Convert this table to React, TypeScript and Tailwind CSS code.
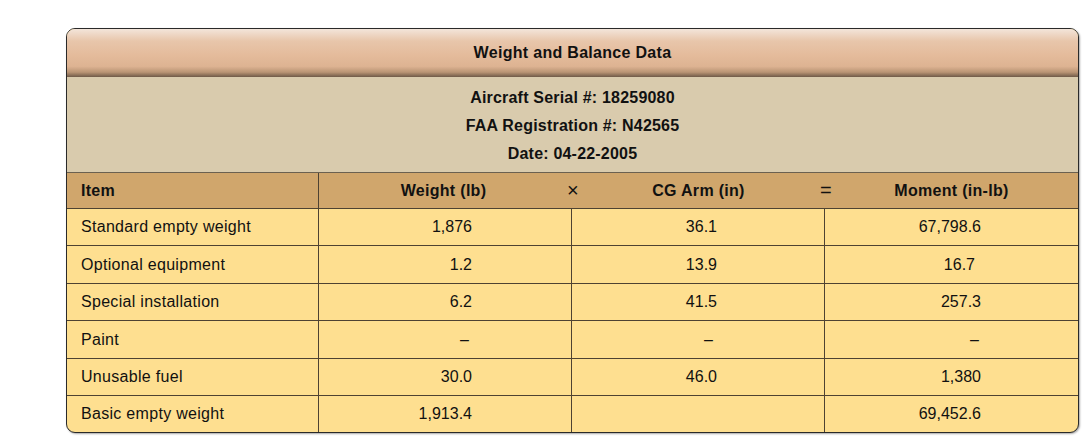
import React from "react";

const rows: { item: string; w: string; cg: string; m: string; mpr?: string }[] = [
  { item: "Standard empty weight", w: "1,876", cg: "36.1", m: "67,798.6" },
  { item: "Optional equipment", w: "1.2", cg: "13.9", m: "16.7", mpr: "pr-[103px]" },
  { item: "Special installation", w: "6.2", cg: "41.5", m: "257.3" },
  { item: "Paint", w: "–", cg: "–", m: "–" },
  { item: "Unusable fuel", w: "30.0", cg: "46.0", m: "1,380" },
  { item: "Basic empty weight", w: "1,913.4", cg: "", m: "69,452.6" },
];

const heights = ["h-[37px]", "h-[38px]", "h-[37px]", "h-[38px]", "h-[37px]", "h-[36px]"];

export default function App() {
  return (
    <div
      className="w-[1090px] h-[444px] bg-white pt-[28px] pl-[66px] text-[#111]"
      style={{ fontFamily: '"Liberation Sans", Arial, sans-serif' }}
    >
      <div className="w-[1013px] rounded-[9px] border border-[#2a2a2a] overflow-hidden shadow-[1px_1px_2px_rgba(0,0,0,0.35)] bg-[#fedf90]">
        <div className="h-[48px] flex items-center justify-center font-bold text-[16px] tracking-[0.3px] bg-[linear-gradient(to_bottom,#f3e5da_0%,#e8c6ab_25%,#e4bb9b_55%,#ddb392_78%,#b99474_90%,#6f5a48_100%)]">
          Weight and Balance Data
        </div>
        <div className="h-[96px] bg-[#d9cbad] flex flex-col items-center justify-center gap-[9px] font-bold text-[16px] tracking-[0.2px] leading-[19px] border-b border-[#6b6150] pt-[1px]">
          <div>Aircraft Serial #: 18259080</div>
          <div>FAA Registration #: N42565</div>
          <div>Date: 04-22-2005</div>
        </div>
        <div className="h-[36px] bg-[#d0a66c] grid grid-cols-[252px_253px_253px_253px] border-b border-[#4e4232] font-bold text-[16px] tracking-[0.3px] pt-[1px]">
          <div className="flex items-center pl-[14px] border-r border-[#4e4232] -mt-[1px]">Item</div>
          <div className="relative flex items-center justify-center pr-[4px]">
            Weight (lb)
            <span className="absolute right-[-7px] top-[4px] font-normal text-[20px] leading-[24px]">×</span>
          </div>
          <div className="relative flex items-center justify-center">
            CG Arm (in)
            <span className="absolute right-[-7px] top-[4px] font-normal text-[20px] leading-[24px]">=</span>
          </div>
          <div className="flex items-center justify-center">Moment (in-lb)</div>
        </div>
        {rows.map((r, i) => (
          <div
            key={i}
            className={`${heights[i]} grid grid-cols-[252px_253px_253px_253px] text-[16px] ${i < rows.length - 1 ? "border-b border-[#4e4232]" : ""}`}
          >
            <div className="flex items-center pl-[14px] border-r border-[#4e4232] tracking-[0.3px]">{r.item}</div>
            <div className="flex items-center justify-end pr-[99px] border-r border-[#4e4232]">
              {r.w === "–" ? <span className="pr-[3px]">{r.w}</span> : r.w}
            </div>
            <div className="flex items-center justify-end pr-[107px] border-r border-[#4e4232]">
              {r.cg === "–" ? <span className="pr-[4px]">{r.cg}</span> : r.cg}
            </div>
            <div className={`flex items-center justify-end ${r.mpr ?? "pr-[97px]"}`}>
              {r.m === "–" ? <span className="pr-[2px]">{r.m}</span> : r.m}
            </div>
          </div>
        ))}
      </div>
    </div>
  );
}
